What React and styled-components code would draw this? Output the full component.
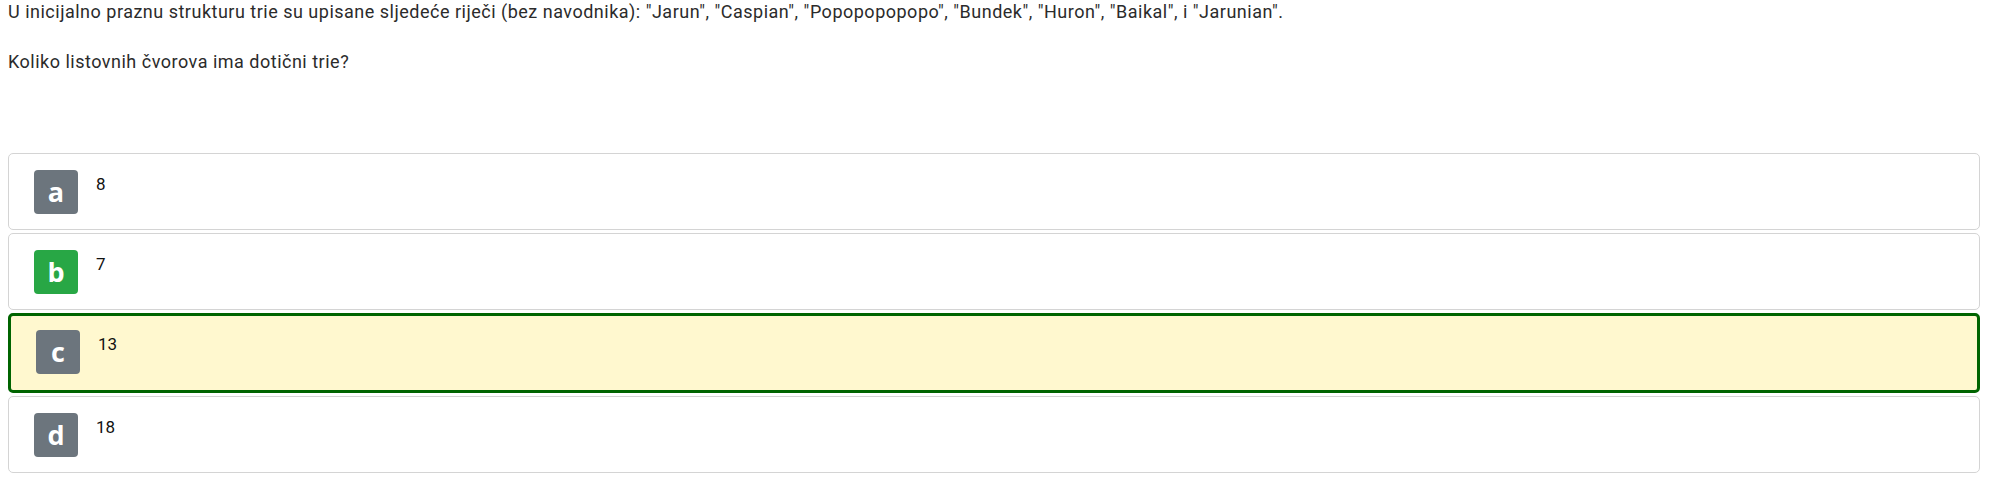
import React from "react";
import styled, { createGlobalStyle } from "styled-components";

const Global = createGlobalStyle`
  html, body { margin: 0; padding: 0; background: #fff; }
  body {
    padding: 0 8px;
    font-family: Roboto, "Liberation Sans", sans-serif;
    color: #212529;
  }
`;

const Question = styled.div`
  font-size: 18px;
  letter-spacing: 0.5px;
  line-height: 24px;
  color: #2b2b2b;
  padding-bottom: 53px;
`;

const Para = styled.p`
  margin: 0 0 26px 0;
`;

const List = styled.div`
  display: flex;
  flex-direction: column;
  gap: 3px;
  margin-right: 12px;
`;

const Option = styled.div`
  display: flex;
  align-items: flex-start;
  gap: 18px;
  box-sizing: border-box;
  height: ${(p) => (p.$selected ? "80px" : "77px")};
  padding: ${(p) => (p.$selected ? "14px 25px" : "16px 25px")};
  border: ${(p) => (p.$selected ? "3px solid #006400" : "1px solid #d4d4d4")};
  border-radius: 5px;
  background: ${(p) => (p.$selected ? "#fff8cf" : "#fff")};
`;

const Badge = styled.div`
  flex: none;
  width: 44px;
  height: 44px;
  border-radius: 4px;
  background: ${(p) => (p.$correct ? "#28a745" : "#6c757d")};
  color: #fff;
  display: flex;
  align-items: center;
  justify-content: center;
  font-family: "Open Sans", Roboto, sans-serif;
  font-weight: 700;
  font-size: 27px;
  line-height: 1;
  padding-bottom: 2px;
  box-sizing: border-box;
`;

const Answer = styled.div`
  font-size: 17px;
  line-height: 24px;
  color: #111;
  padding-top: 2px;
`;

const options = [
  { key: "a", text: "8" },
  { key: "b", text: "7", correct: true },
  { key: "c", text: "13", selected: true },
  { key: "d", text: "18" },
];

export default function App() {
  return (
    <>
      <Global />
      <Question>
        <Para>
          U inicijalno praznu strukturu trie su upisane sljedeće riječi (bez
          navodnika): "Jarun", "Caspian", "Popopopopopo", "Bundek", "Huron",
          "Baikal", i "Jarunian".
        </Para>
        <Para>Koliko listovnih čvorova ima dotični trie?</Para>
      </Question>
      <List>
        {options.map((o) => (
          <Option key={o.key} $selected={o.selected}>
            <Badge $correct={o.correct}>{o.key}</Badge>
            <Answer>{o.text}</Answer>
          </Option>
        ))}
      </List>
    </>
  );
}
